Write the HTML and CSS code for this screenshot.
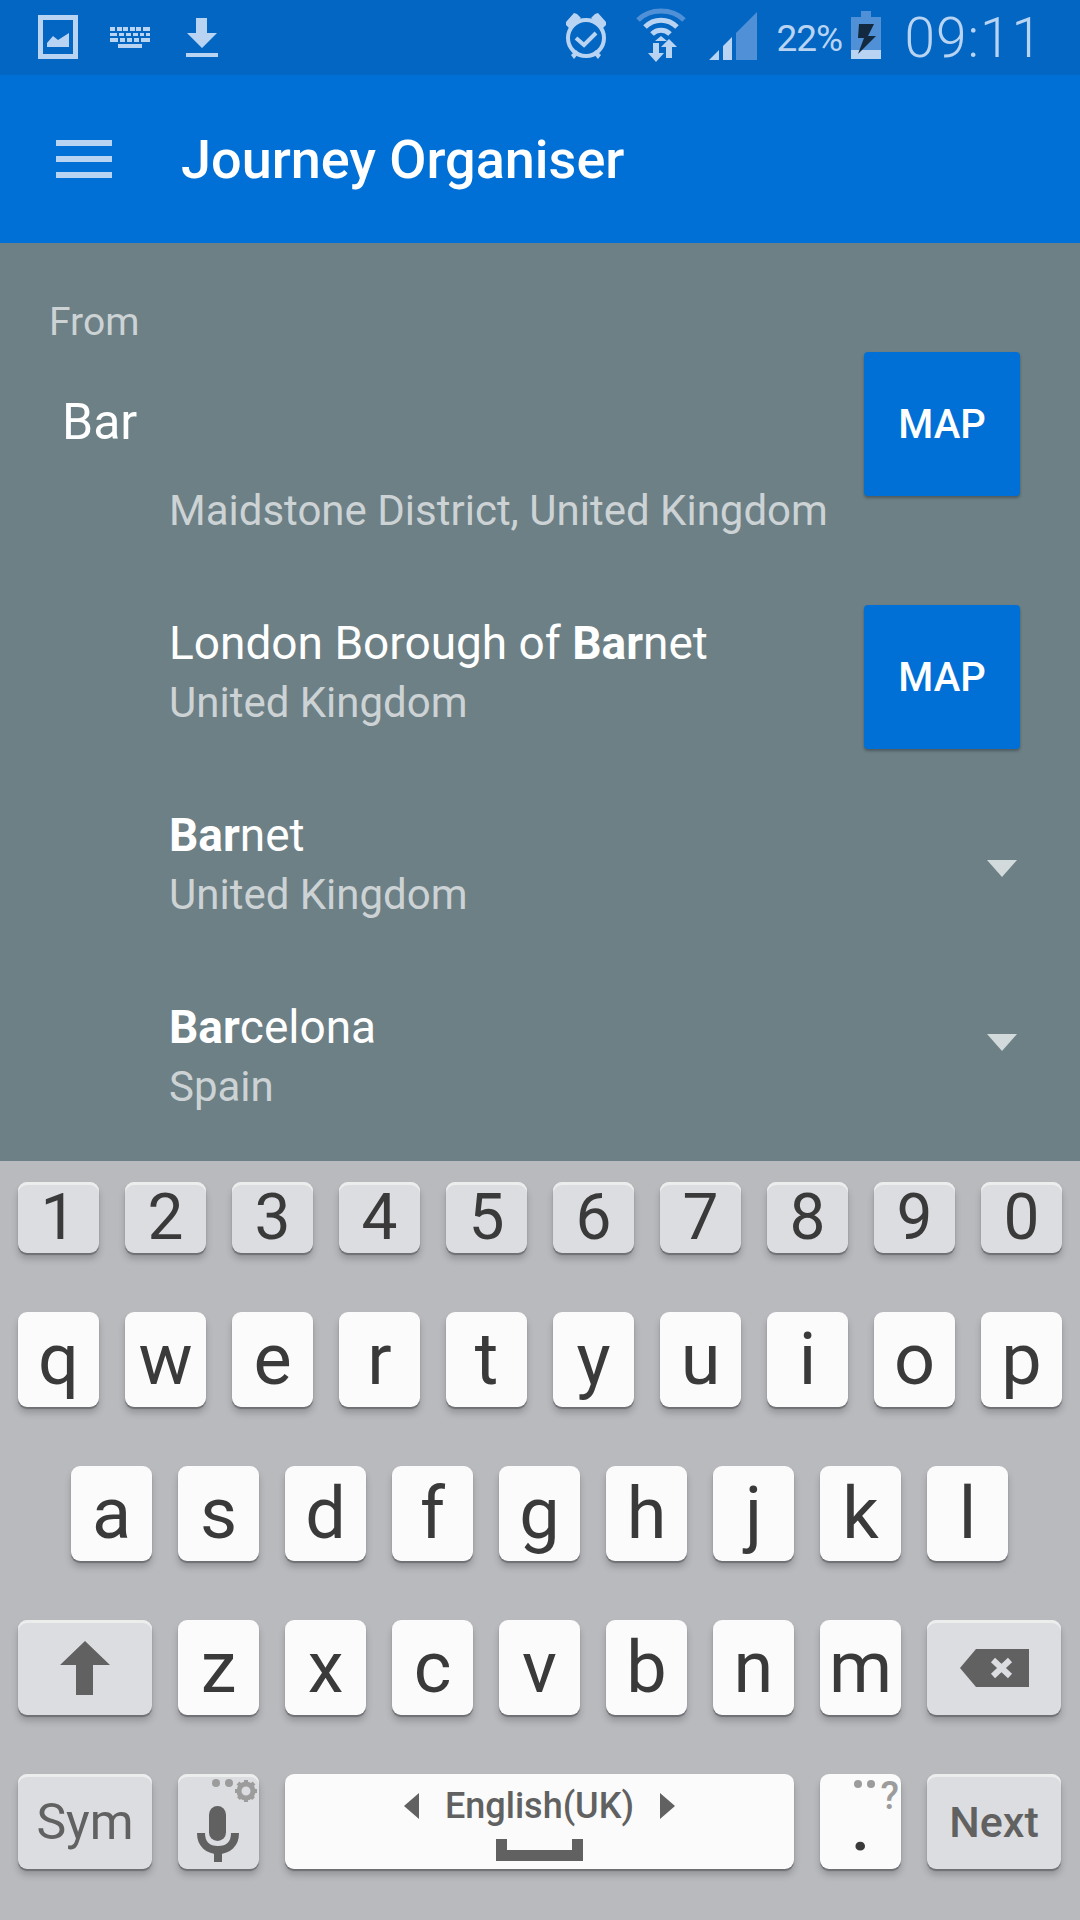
FILE: index.html
```html
<!DOCTYPE html>
<html lang="en">
<head>
<meta charset="utf-8">
<title>Journey Organiser</title>
<link rel="stylesheet" href="styles.css">
</head>
<body>
<div class="app">
  <header class="status">
    <div class="status-left">
      <svg class="i-image" width="40" height="75" viewBox="0 0 40 75"><path class="pale" fill-rule="evenodd" d="M0 15h40v44H0zM5 20v34h30V20z"/><path class="pale" d="M9 47v-4l6-7 5 4 11-7v14z"/></svg>
      <svg class="i-kbd" width="40" height="75" viewBox="0 0 40 75"><g class="pale"><rect x="0" y="27" width="5" height="4"/><rect x="7" y="27" width="5" height="4"/><rect x="13" y="27" width="5" height="4"/><rect x="20" y="27" width="5" height="4"/><rect x="26" y="27" width="5" height="4"/><rect x="33" y="27" width="7" height="4"/><rect x="0" y="33" width="7" height="3"/><rect x="9" y="33" width="5" height="3"/><rect x="16" y="33" width="5" height="3"/><rect x="23" y="33" width="5" height="3"/><rect x="30" y="33" width="4" height="3"/><rect x="36" y="33" width="4" height="3"/><rect x="0" y="38" width="8" height="4"/><rect x="10" y="38" width="5" height="4"/><rect x="17" y="38" width="5" height="4"/><rect x="24" y="38" width="5" height="4"/><rect x="31" y="38" width="9" height="4"/><rect x="8" y="44" width="24" height="4"/></g></svg>
      <svg class="i-dl" width="34" height="75" viewBox="0 0 34 75"><path class="pale" d="M11 18h11v15h10L17 48 2 33h9zM1 53h32v4H1z"/></svg>
    </div>
    <div class="status-right">
      <svg class="i-alarm" width="44" height="75" viewBox="0 0 44 75"><circle class="line" cx="22" cy="38" r="18"/><path class="line" d="M12 38l8 7 12-12"/><path class="pale" d="M2 22l8-9 3 1 4 4-11 11-4-4zM42 22l-8-9-3 1-4 4 11 11 4-4zM7 55l5-5 3 3-5 6zM37 55l-5-5-3 3 5 6z"/></svg>
      <svg class="i-wifi" width="50" height="75" viewBox="0 0 50 75"><path class="arc-dim" d="M2 20C14 8 36 8 48 20"/><path class="arc" d="M9 27c9-9 23-9 32 0"/><path class="arc" d="M16 34c5-5 13-5 18 0"/><path class="pale" d="M25 36l-6 5h12zM17 43h6v10h5l-8 9-8-9h5zM30 48l-0-0 0 0zM30 47h-5l8-8 8 8h-5v11h-6z"/></svg>
      <svg class="i-signal" width="48" height="75" viewBox="0 0 48 75"><path class="pale" d="M0 60l10-10v10zM14 60V46l9-9v23z"/><path class="dim" d="M27 60V33L48 12v48z"/></svg>
      <span class="pct">22%</span>
      <svg class="i-batt" width="30" height="75" viewBox="0 0 30 75"><path class="dim" d="M10 11h10v6h10v33H0V17h10z"/><path class="pale" d="M0 50h30v9H0z"/><path class="bolt" d="M8 24h15l-6 12h8L7 54l6-16H7z"/></svg>
      <span class="time">09:11</span>
    </div>
  </header>

  <div class="appbar">
    <div class="burger"><span></span><span></span><span></span></div>
    <h1 class="title">Journey Organiser</h1>
  </div>

  <main class="content">
    <div class="label">From</div>
    <div class="field-row first">
      <div class="value">Bar</div>
      <div class="map">MAP</div>
    </div>
    <div class="field-row second">
      <div class="map">MAP</div>
    </div>
    <div class="select"><span class="caret"></span></div>
    <div class="select"><span class="caret"></span></div>

    <div class="dropdown">
      <div class="item"><div class="main"><b>Bar</b>ming</div><div class="sub">Maidstone District, United Kingdom</div></div>
      <div class="item"><div class="main">London Borough of <b>Bar</b>net</div><div class="sub">United Kingdom</div></div>
      <div class="item"><div class="main"><b>Bar</b>net</div><div class="sub">United Kingdom</div></div>
      <div class="item"><div class="main"><b>Bar</b>celona</div><div class="sub">Spain</div></div>
    </div>
  </main>

  <section class="keyboard">
    <div class="row digits">
      <div class="key">1</div><div class="key">2</div><div class="key">3</div><div class="key">4</div><div class="key">5</div><div class="key">6</div><div class="key">7</div><div class="key">8</div><div class="key">9</div><div class="key">0</div>
    </div>
    <div class="row">
      <div class="key">q</div><div class="key">w</div><div class="key">e</div><div class="key">r</div><div class="key">t</div><div class="key">y</div><div class="key">u</div><div class="key">i</div><div class="key">o</div><div class="key">p</div>
    </div>
    <div class="row indented">
      <div class="key">a</div><div class="key">s</div><div class="key">d</div><div class="key">f</div><div class="key">g</div><div class="key">h</div><div class="key">j</div><div class="key">k</div><div class="key">l</div>
    </div>
    <div class="row">
      <div class="key fn wide"><svg width="50" height="54" viewBox="0 0 50 54"><path class="ink" d="M25 0l25 24H33v30H16V24H0z"/></svg></div>
      <div class="key">z</div><div class="key">x</div><div class="key">c</div><div class="key">v</div><div class="key">b</div><div class="key">n</div><div class="key">m</div>
      <div class="key fn wide"><svg width="69" height="38" viewBox="0 0 69 38"><path class="ink" d="M16 0h53v38H16L0 19z"/><path class="x" d="M33 11l17 16M50 11L33 27"/></svg></div>
    </div>
    <div class="row">
      <div class="key fn wide sym">Sym</div>
      <div class="key fn mic"><svg width="81" height="95" viewBox="0 0 81 95"><circle class="hint" cx="38" cy="9" r="4"/><circle class="hint" cx="51" cy="9" r="4"/><circle class="gear-ring" cx="68" cy="17" r="7"/><path class="gear-teeth" d="M68 6v22M57 17h22M60 9l16 16M76 9L60 25"/><rect class="ink" x="31" y="32" width="17" height="35" rx="8.5"/><path class="mic-arc" d="M23 59c0 11 7 17 17 17s17-6 17-17"/><rect class="ink" x="36" y="76" width="8" height="12"/></svg></div>
      <div class="key space">
        <div class="lang"><span class="tri left"></span><span class="lang-name">English(UK)</span><span class="tri right"></span></div>
        <span class="bar"></span>
      </div>
      <div class="key dot"><span class="dot-mark">.</span><span class="hint-dots"><i></i><i></i></span><span class="hint-q">?</span></div>
      <div class="key fn wide next">Next</div>
    </div>
  </section>
</div>
</body>
</html>
```
FILE: styles.css
```css
* { box-sizing: border-box; }
html, body { margin: 0; padding: 0; }
body { width: 1080px; height: 1920px; overflow: hidden; font-family: Roboto, "Liberation Sans", sans-serif; }
.app { width: 1080px; height: 1920px; display: flex; flex-direction: column; }

/* status bar */
.status { height: 75px; flex: none; background: #0266c2; display: flex; justify-content: space-between; align-items: center; padding: 0 37px 0 38px; color: #b9d4f2; }
.status-left, .status-right { display: flex; align-items: center; height: 75px; }
.pale { fill: #b9d4f2; }
.dim { fill: #4f90d6; }
.bolt { fill: #12293f; }
.line { fill: none; stroke: #b9d4f2; stroke-width: 4; }
.arc { fill: none; stroke: #b9d4f2; stroke-width: 5; }
.arc-dim { fill: none; stroke: #4f90d6; stroke-width: 5; }
.i-kbd { margin-left: 32px; }
.i-dl { margin-left: 35px; }
.i-wifi { margin-left: 28px; }
.i-signal { margin-left: 23px; }
.pct { margin-left: 19px; font-size: 37px; letter-spacing: -1px; width: 65px; margin-top: 2px; }
.i-batt { margin-left: 10px; }
.time { margin-left: 23px; font-size: 55px; font-weight: 300; letter-spacing: 1px; margin-top: 1px; }

/* app bar */
.appbar { height: 168px; flex: none; background: #0070d6; display: flex; align-items: center; padding-left: 56px; }
.burger { width: 56px; display: flex; flex-direction: column; gap: 10px; }
.burger span { display: block; height: 6px; background: #b9d4f2; }
.title { margin: 0 0 0 69px; font-size: 54px; font-weight: 500; color: #fff; }

/* form */
.content { position: relative; flex: 1; background: #6c8086; overflow: hidden; }
.label { padding: 56px 0 0 49px; font-size: 39px; line-height: 46px; color: #cdd3d5; }
.field-row { display: flex; justify-content: space-between; align-items: center; padding: 0 60px 0 62px; }
.field-row.first { margin-top: 7px; }
.field-row.second { margin-top: 109px; justify-content: flex-end; }
.value { font-size: 50px; color: #fff; margin-top: -4px; }
.map { width: 156px; height: 144px; background: #0070d6; border-radius: 4px; display: flex; align-items: center; justify-content: center; color: #fff; font-size: 40px; font-weight: 500; box-shadow: 0 2px 3px rgba(0,0,0,.3); }
.select { display: flex; justify-content: flex-end; padding-right: 63px; height: 174px; }
.select:first-of-type { margin-top: 0; }
.field-row.second + .select { padding-top: 111px; height: 285px; }
.caret { width: 0; height: 0; border-left: 15px solid transparent; border-right: 15px solid transparent; border-top: 17px solid #d3dadc; }

/* suggestions */
.dropdown { position: absolute; left: 48px; top: 233px; width: 804px; height: 700px; background: #6c8086; border-radius: 4px; overflow: hidden; }
.dropdown-shadow { display: none; }
.item { height: 192px; padding: 36px 0 0 121px; }
.item:first-child { margin-top: -91px; }
.main { font-size: 46px; line-height: 60px; color: #fff; white-space: nowrap; }
.main b { font-weight: 700; }
.sub { font-size: 42px; line-height: 60px; color: #cdd3d5; white-space: nowrap; }

/* keyboard */
.keyboard { height: 759px; flex: none; background: #b9babe; padding: 21px 18px 0; display: flex; flex-direction: column; gap: 59px; color: #3a3a3a; position: relative; }
.row { display: flex; gap: 26px; height: 95px; }
.row.digits { height: 71px; }
.row.indented { padding-left: 53px; }
.key { position: relative; width: 81px; flex: none; border-radius: 9px; background: #fbfbfb; display: flex; align-items: center; justify-content: center; font-size: 72px; box-shadow: 0 2px 1px #6f7074, 0 6px 7px rgba(0,0,0,.2); }
.digits .key { background: #dcdde0; font-size: 64px; box-shadow: inset 0 3px 0 #eceded, 0 2px 1px #6f7074, 0 6px 7px rgba(0,0,0,.2); }
.key.fn { background: #dcdde0; color: #616161; box-shadow: inset 0 3px 0 #eceded, 0 2px 1px #6f7074, 0 6px 7px rgba(0,0,0,.2); }
.key.wide { width: 134px; }
.sym { font-size: 50px; }
.next { font-size: 43px; font-weight: 500; }
.ink { fill: #616161; }
.x { fill: none; stroke: #dcdde0; stroke-width: 6; }
.hint { fill: #9c9c9c; }
.gear-ring { fill: none; stroke: #9c9c9c; stroke-width: 5; }
.gear-teeth { fill: none; stroke: #9c9c9c; stroke-width: 4; stroke-dasharray: 5 12; }
.mic-arc { fill: none; stroke: #616161; stroke-width: 8; }

.space { width: 509px; flex-direction: column; justify-content: flex-start; padding-top: 12px; color: #616161; }
.lang { display: flex; align-items: center; gap: 26px; height: 40px; }
.lang-name { font-size: 36px; font-weight: 500; }
.tri { width: 0; height: 0; border-top: 13px solid transparent; border-bottom: 13px solid transparent; }
.tri.left { border-right: 15px solid #616161; }
.tri.right { border-left: 15px solid #616161; }
.bar { display: block; margin-top: 13px; width: 87px; height: 22px; border: solid #616161; border-width: 0 11px 11px; }

.dot-mark { font-size: 60px; font-weight: 700; margin-top: 16px; line-height: 1; }
.hint-dots { position: absolute; left: 34px; top: 6px; display: flex; gap: 5px; }
.hint-dots i { display: block; width: 8px; height: 8px; border-radius: 50%; background: #9c9c9c; }
.hint-q { position: absolute; right: 2px; top: 2px; font-size: 38px; line-height: 40px; color: #9c9c9c; font-weight: 500; }
```
